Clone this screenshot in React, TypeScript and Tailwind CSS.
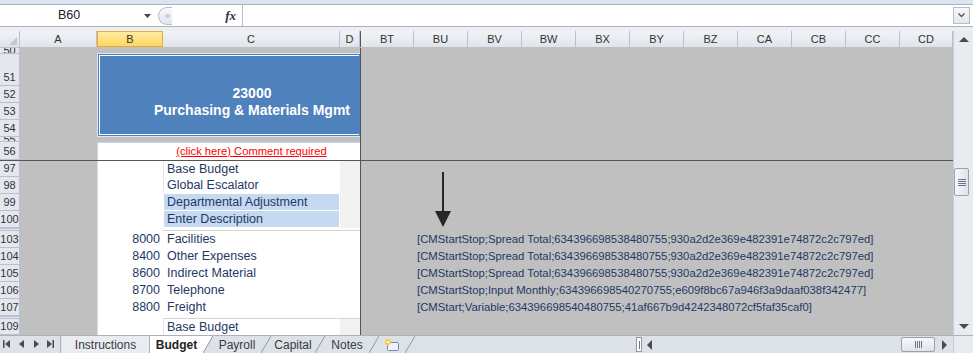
import React from 'react';

const SHEET = 'bg-[#c0c0c0]';
const HEAD = 'bg-[#e4e8ee]';
const LINE = 'border-[#bac1ca]';
const INK = 'text-[#1f3864]';

const leftCols = [
  { n: 'A', w: 'w-[77px]' },
  { n: 'B', w: 'w-[66px]', sel: true },
  { n: 'C', w: 'w-[177px]' },
  { n: 'D', w: 'w-[20px]' },
];

const rightCols = [
  { n: 'BT', w: 'w-[53px]' },
  { n: 'BU', w: 'w-[54px]' },
  { n: 'BV', w: 'w-[54px]' },
  { n: 'BW', w: 'w-[54px]' },
  { n: 'BX', w: 'w-[54px]' },
  { n: 'BY', w: 'w-[54px]' },
  { n: 'BZ', w: 'w-[54px]' },
  { n: 'CA', w: 'w-[54px]' },
  { n: 'CB', w: 'w-[54px]' },
  { n: 'CC', w: 'w-[54px]' },
  { n: 'CD', w: 'w-[53px]' },
];

type SheetRow = {
  n: string;
  h: string;
  kind: 'list' | 'cost' | 'gap';
  text?: string;
  code?: string;
  hl?: boolean;
  cm?: string;
};

const CM_TOTAL = '[CMStartStop;Spread Total;634396698538480755;930a2d2e369e482391e74872c2c797ed]';

const lowerRows: SheetRow[] = [
  { n: '97', h: 'h-[16px]', kind: 'list', text: 'Base Budget' },
  { n: '98', h: 'h-[17px]', kind: 'list', text: 'Global Escalator' },
  { n: '99', h: 'h-[17px]', kind: 'list', text: 'Departmental Adjustment', hl: true },
  { n: '100', h: 'h-[17px]', kind: 'list', text: 'Enter Description', hl: true },
  { n: '', h: 'h-[3px]', kind: 'gap' },
  { n: '103', h: 'h-[17px]', kind: 'cost', code: '8000', text: 'Facilities', cm: CM_TOTAL },
  { n: '104', h: 'h-[17px]', kind: 'cost', code: '8400', text: 'Other Expenses', cm: CM_TOTAL },
  { n: '105', h: 'h-[17px]', kind: 'cost', code: '8600', text: 'Indirect Material', cm: CM_TOTAL },
  {
    n: '106',
    h: 'h-[17px]',
    kind: 'cost',
    code: '8700',
    text: 'Telephone',
    cm: '[CMStartStop;Input Monthly;634396698540270755;e609f8bc67a946f3a9daaf038f342477]',
  },
  {
    n: '107',
    h: 'h-[17px]',
    kind: 'cost',
    code: '8800',
    text: 'Freight',
    cm: '[CMStart;Variable;634396698540480755;41af667b9d4242348072cf5faf35caf0]',
  },
  { n: '', h: 'h-[3px]', kind: 'gap' },
  { n: '109', h: 'h-[16px]', kind: 'list', text: 'Base Budget' },
];

// partial rows are only a few px tall, so their numbers show as a clipped sliver
const RowHead = ({ label, h, gap, partial }: { label: string; h: string; gap?: boolean; partial?: boolean }) => {
  if (gap) return <div className={`w-[20px] shrink-0 ${h} ${HEAD} border-r border-b border-t ${LINE}`} />;
  if (partial)
    return (
      <div
        className={`w-[20px] shrink-0 ${h} ${HEAD} border-r border-b ${LINE} overflow-hidden flex items-start justify-center text-[11px] leading-[4px] text-[#333]`}
      >
        {label}
      </div>
    );
  return (
    <div
      className={`w-[20px] shrink-0 ${h} ${HEAD} border-r border-b ${LINE} overflow-hidden flex items-end justify-center text-[11px] leading-[16px] text-[#333]`}
    >
      {label}
    </div>
  );
};

const Divider = () => <div className="w-px shrink-0 bg-[#555]" />;

const Tri = ({ dir }: { dir: 'up' | 'down' | 'left' | 'right' }) => {
  const pts = {
    up: '0,6 5,1 10,6',
    down: '0,1 5,6 10,1',
    left: '6,0 1,5 6,10',
    right: '1,0 6,5 1,10',
  }[dir];
  const size = dir === 'up' || dir === 'down' ? { w: 10, h: 7 } : { w: 7, h: 10 };
  return (
    <svg width={size.w} height={size.h} viewBox={`0 0 ${size.w} ${size.h}`}>
      <polygon points={pts} fill="#4a4a4a" />
    </svg>
  );
};

const Slash = ({ fill }: { fill?: string }) => (
  <svg width="10" height="18" viewBox="0 0 10 18" className="shrink-0">
    {fill && <polygon points="0,0 10,0 0,17" fill={fill} />}
    <line x1="0" y1="17" x2="10" y2="0" stroke="#8e98a5" strokeWidth="1" />
  </svg>
);

export default function App() {
  return (
    <div className="w-[973px] h-[353px] overflow-hidden bg-[#e9ecf0] font-['Liberation_Sans',Arial,sans-serif] text-[#333]">
      {/* ribbon edge */}
      <div className="h-[5px] bg-[#dbe5f2] border-b border-[#a7b3c2]" />

      {/* formula bar */}
      <div className="h-[22px] flex bg-white border-b border-[#a9b1bb]">
        <div className="w-[155px] flex items-center">
          <span className="flex-1 text-center text-[12.5px] text-[#222] pr-[6px]">B60</span>
          <svg width="7" height="4" viewBox="0 0 7 4" className="mr-[4px]">
            <polygon points="0,0 7,0 3.5,4" fill="#444" />
          </svg>
        </div>
        <div className="w-[88px] flex items-center border-r border-[#b8bfc8]">
          <div className="w-[14px] h-[18px] ml-[3px] rounded-l-full border border-r-0 border-[#b3bbc5] bg-gradient-to-b from-[#f7f8fa] to-[#e2e6eb] flex items-center justify-center">
            <div className="w-[5px] h-[4px] rounded-full bg-[#c9ced5] ml-[3px]" />
          </div>
          <span className="ml-auto mr-[6px] font-['Liberation_Serif',serif] italic font-bold text-[13px] text-[#333]">
            fx
          </span>
        </div>
        <div className="flex-1" />
        <div className="w-[17px] my-[2px] mr-[3px] border border-[#b5bdc7] bg-gradient-to-b from-[#f6f7f9] to-[#e3e7ec] flex items-center justify-center">
          <svg width="7" height="5" viewBox="0 0 7 5">
            <polyline points="0.5,0.5 3.5,3.5 6.5,0.5" fill="none" stroke="#555" strokeWidth="1.3" />
          </svg>
        </div>
      </div>
      <div className="h-[4px] bg-[#eceef1]" />

      {/* sheet + vertical scroll */}
      <div className="h-[304px] flex">
        <div className="w-[953px] flex flex-col">
          {/* column headers */}
          <div className={`h-[17px] flex border-b ${LINE} bg-gradient-to-b from-[#f1f3f6] to-[#e0e4ea] text-[11px] text-[#333]`}>
            <div className={`w-[20px] border-r ${LINE} flex items-end justify-end p-[2px]`}>
              <svg width="8" height="8" viewBox="0 0 8 8">
                <polygon points="8,0 8,8 0,8" fill="#c3c9d1" />
              </svg>
            </div>
            {leftCols.map((c) =>
              c.sel ? (
                <div
                  key={c.n}
                  className={`${c.w} flex items-center justify-center bg-gradient-to-b from-[#ffeca0] to-[#ffd55c] border border-[#e9a83b]`}
                >
                  {c.n}
                </div>
              ) : (
                <div key={c.n} className={`${c.w} flex items-center justify-center border-r ${LINE}`}>
                  {c.n}
                </div>
              ),
            )}
            <div className="w-px bg-[#555]" />
            {rightCols.map((c) => (
              <div key={c.n} className={`${c.w} flex items-center justify-center border-r ${LINE}`}>
                {c.n}
              </div>
            ))}
          </div>

          {/* frozen top rows 50-56 */}
          <div className="h-[112px] flex">
            <div className="w-[20px] flex flex-col">
              <RowHead label="50" h="h-[6px]" partial />
              <RowHead label="51" h="h-[32px]" />
              <RowHead label="52" h="h-[17px]" />
              <RowHead label="53" h="h-[17px]" />
              <RowHead label="54" h="h-[17px]" />
              <RowHead label="55" h="h-[5px]" partial />
              <RowHead label="56" h="h-[18px]" />
            </div>
            <div className={`w-[77px] ${SHEET}`} />
            <div className={`w-[263px] flex flex-col ${SHEET}`}>
              <div className="h-[5px]" />
              <div className="h-[84px] border border-r-0 border-[#dce6f2] bg-[#4f81bd] p-px">
                <div className="h-full border border-r-0 border-white flex flex-col items-center justify-end pb-[15px] pl-[45px] text-white font-bold text-[14px] leading-[17px]">
                  <div>23000</div>
                  <div>Purchasing &amp; Materials Mgmt</div>
                </div>
              </div>
              <div className="h-[5px]" />
              <div className="h-[18px] bg-white border-l border-t border-[#c9d7ea] flex items-center justify-center pl-[45px]">
                <span className="text-[11.2px] text-[#ff0000] underline">(click here) Comment required</span>
              </div>
            </div>
            <Divider />
            <div className={`w-[592px] ${SHEET}`} />
          </div>

          {/* freeze line */}
          <div className="h-px bg-[#555]" />

          {/* lower rows */}
          <div className="h-[174px] flex flex-col relative">
            {lowerRows.map((r, i) => (
              <div key={i} className={`flex ${r.h}`}>
                <RowHead label={r.n} h={r.h} gap={r.kind === 'gap'} />
                <div className={`w-[77px] ${SHEET}`} />
                {r.kind === 'gap' && (
                  <>
                    <div className="w-[66px] bg-white border-l border-[#d5dfeb]" />
                    <div className="w-[197px] bg-white border-b border-[#d4d4d4]" />
                  </>
                )}
                {r.kind === 'list' && (
                  <>
                    <div className="w-[66px] bg-white border-l border-[#d5dfeb]" />
                    <div
                      className={`w-[177px] flex items-center pl-[3px] text-[12.5px] whitespace-nowrap ${INK} ${
                        r.hl ? 'bg-[#c5d9f1] border-l border-r border-b border-white' : 'bg-white border-l border-[#e3e8ef]'
                      }`}
                    >
                      {r.text}
                    </div>
                    <div className="w-[20px] bg-[#f2f2f2]" />
                  </>
                )}
                {r.kind === 'cost' && (
                  <>
                    <div
                      className={`w-[66px] bg-white border-l border-[#d5dfeb] flex items-center justify-end pr-[3px] text-[12.5px] ${INK}`}
                    >
                      {r.code}
                    </div>
                    <div className={`w-[177px] bg-white flex items-center pl-[4px] text-[12.5px] whitespace-nowrap ${INK}`}>
                      {r.text}
                    </div>
                    <div className="w-[20px] bg-white" />
                  </>
                )}
                <Divider />
                <div
                  className={`w-[592px] ${SHEET} flex items-center pl-[56px] text-[11.3px] whitespace-nowrap overflow-hidden ${INK}`}
                >
                  {r.cm}
                </div>
              </div>
            ))}

            {/* drawn arrow shape */}
            <svg width="16" height="55" viewBox="0 0 16 55" className="absolute left-[435px] top-[11px]">
              <line x1="8" y1="0" x2="8" y2="42" stroke="#262626" strokeWidth="2" />
              <polygon points="0,39 16,39 8,55" fill="#262626" />
            </svg>
          </div>
        </div>

        {/* vertical scrollbar */}
        <div className="w-[20px] flex flex-col bg-[#e8ebf0] border-l border-[#c8ced6]">
          <div className="h-[17px] flex items-center justify-center">
            <Tri dir="up" />
          </div>
          <div className="flex-1 flex flex-col">
            <div className="h-[120px]" />
            <div className="h-[28px] w-[15px] rounded-[2px] border border-[#97a1ad] bg-gradient-to-r from-[#f7f8fa] to-[#dfe3e9] flex flex-col items-center justify-center gap-[1px]">
              <div className="w-[8px] h-px bg-[#6b7480]" />
              <div className="w-[8px] h-px bg-[#6b7480]" />
              <div className="w-[8px] h-px bg-[#6b7480]" />
              <div className="w-[8px] h-px bg-[#6b7480]" />
            </div>
          </div>
          <div className="h-[17px] flex items-center justify-center">
            <Tri dir="down" />
          </div>
        </div>
      </div>

      {/* sheet tabs + horizontal scrollbar */}
      <div className="h-[18px] flex items-stretch bg-[#dde2e9] border-t border-[#aab2bd] text-[12px] text-[#3a3a3a]">
        <svg width="60" height="17" viewBox="0 0 60 17" className="shrink-0">
          <rect x="3" y="4" width="1.5" height="8" fill="#4a4a4a" />
          <polygon points="10,4 5,8 10,12" fill="#4a4a4a" />
          <polygon points="24,4 19,8 24,12" fill="#4a4a4a" />
          <polygon points="34,4 39,8 34,12" fill="#4a4a4a" />
          <polygon points="47,4 52,8 47,12" fill="#4a4a4a" />
          <rect x="52.5" y="4" width="1.5" height="8" fill="#4a4a4a" />
        </svg>
        <div className="w-[2px] border-l border-[#aab2bd]" />
        <div className="w-[88px] bg-[#e9ecf0] border-r border-[#aab2bd] flex items-center justify-center">Instructions</div>
        <div className="w-[53px] bg-white flex items-center justify-center font-bold text-[#222]">Budget</div>
        <Slash fill="#ffffff" />
        <div className="w-[48px] flex items-center justify-center">Payroll</div>
        <Slash />
        <div className="w-[44px] flex items-center justify-center">Capital</div>
        <Slash />
        <div className="w-[44px] flex items-center justify-center">Notes</div>
        <Slash />
        <div className="w-[26px] flex items-center justify-center">
          <svg width="16" height="14" viewBox="0 0 16 14">
            <rect x="3.5" y="4.5" width="11" height="8" rx="1" fill="#eef3fa" stroke="#6f8bb0" />
            <circle cx="4" cy="4" r="3" fill="#f6c94c" />
            <circle cx="4" cy="4" r="1.3" fill="#fff4c7" />
          </svg>
        </div>
        <Slash />
        <div className="flex-1" />
        <div className="w-[6px] my-[1px] border border-[#8f99a5] bg-white flex items-center justify-center">
          <div className="w-px h-[8px] bg-[#6b7480]" />
        </div>
        <div className="w-[14px] flex items-center justify-center">
          <Tri dir="left" />
        </div>
        <div className="w-[245px]" />
        <div className="w-[34px] my-[1px] rounded-[2px] border border-[#97a1ad] bg-gradient-to-b from-[#f7f8fa] to-[#dfe3e9] flex items-center justify-center gap-[1px]">
          <div className="w-px h-[7px] bg-[#6b7480]" />
          <div className="w-px h-[7px] bg-[#6b7480]" />
          <div className="w-px h-[7px] bg-[#6b7480]" />
          <div className="w-px h-[7px] bg-[#6b7480]" />
        </div>
        <div className="w-[18px] flex items-center justify-center">
          <Tri dir="right" />
        </div>
        <div className="w-[20px] bg-[#e8ebf0] border-l border-[#c8ced6]" />
      </div>
    </div>
  );
}
